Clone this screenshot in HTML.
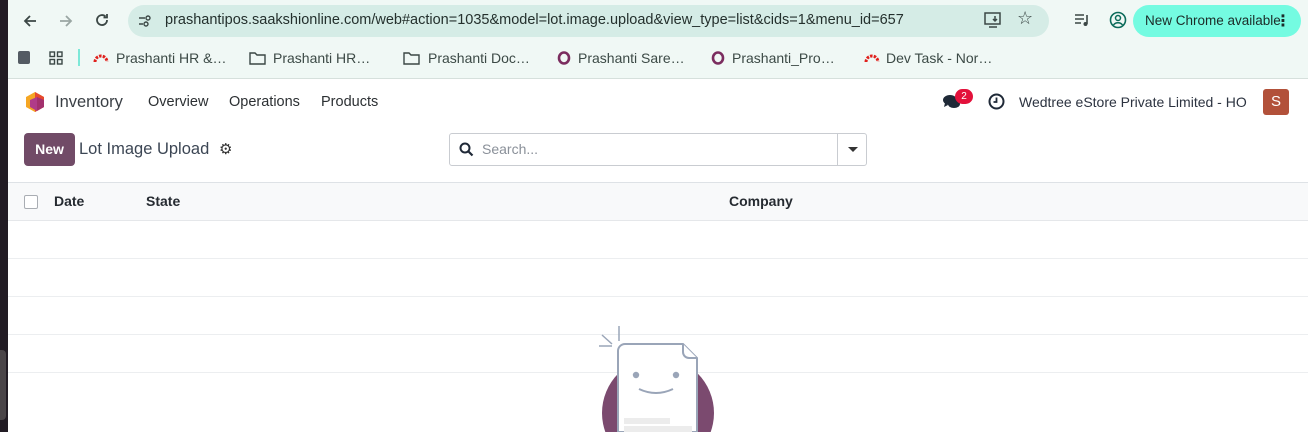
<!DOCTYPE html>
<html><head><meta charset="utf-8"><style>
*{box-sizing:border-box;margin:0;padding:0}
body{width:1308px;height:432px;overflow:hidden;font-family:"Liberation Sans","DejaVu Sans",sans-serif;background:#221c24;position:relative}
.win{position:absolute;left:8px;top:0;right:0;bottom:0;background:#fff;overflow:hidden}
.tb{position:absolute;left:0;top:0;right:0;height:79px;background:#f0f8f5;border-bottom:1px solid #d6e0dc}
.url{position:absolute;left:120px;top:5px;width:921px;height:32px;border-radius:16px;background:#d5ece6}
.t{position:absolute;white-space:nowrap}
.nc{position:absolute;left:1125px;top:5px;width:168px;height:32px;border-radius:16px;background:#74fbe1;font-size:13.5px;color:#1c2b28;padding:8px 12px}
.bm{font-size:14px;color:#3c4a46;top:50px}
.nav{font-size:14.5px;color:#2c3033;top:94px}
.hdr{position:absolute;left:0;right:0;top:182px;height:39px;background:#f8f9fa;border-top:1px solid #dee2e6;border-bottom:1px solid #e5e7ea}
.row{position:absolute;left:0;right:0;height:1px;background:#eceef0}
</style></head><body>
<div class="win">
<div class="tb">
 <svg style="position:absolute;left:14px;top:13px" width="16" height="16" viewBox="0 0 16 16"><path d="M14 8H3M8 3L3 8l5 5" stroke="#3b4745" stroke-width="1.8" fill="none"/></svg>
 <svg style="position:absolute;left:50px;top:13px" width="16" height="16" viewBox="0 0 16 16"><path d="M2 8h11M8 3l5 5-5 5" stroke="#9aa6a3" stroke-width="1.8" fill="none"/></svg>
 <svg style="position:absolute;left:86px;top:12px" width="16" height="16" viewBox="0 0 16 16"><path d="M13 8a5 5 0 1 1-1.5-3.5M13 2v3.5H9.5" stroke="#3b4745" stroke-width="1.8" fill="none"/></svg>
 <div class="url"></div>
 <svg style="position:absolute;left:129px;top:13px" width="16" height="16" viewBox="0 0 16 16"><path d="M2 5h6M2 11h4" stroke="#3b4745" stroke-width="1.6"/><circle cx="11" cy="5" r="2" stroke="#3b4745" fill="none" stroke-width="1.4"/><circle cx="9" cy="11" r="2" stroke="#3b4745" fill="none" stroke-width="1.4"/></svg>
 <div class="t" style="left:157px;top:12px;font-size:14.5px;color:#24302d">prashantipos.saakshionline.com/web#action=1035&amp;model=lot.image.upload&amp;view_type=list&amp;cids=1&amp;menu_id=657</div>
 <svg style="position:absolute;left:976px;top:12px" width="18" height="16" viewBox="0 0 18 16"><rect x="1" y="1" width="15" height="11" stroke="#3b4745" fill="none" stroke-width="1.5"/><path d="M5 15h8M11 4v5M9 7l2 2 2-2" stroke="#3b4745" stroke-width="1.5" fill="none"/></svg>
 <div class="t" style="left:1009px;top:8px;font-size:18px;color:#3b4745">☆</div>
 <svg style="position:absolute;left:1066px;top:13px" width="16" height="14" viewBox="0 0 16 14"><path d="M1 2h9M1 6h9M1 10h6" stroke="#3b4745" stroke-width="1.6"/><path d="M13 2v9" stroke="#3b4745" stroke-width="1.6"/><circle cx="11.5" cy="11" r="2" fill="#3b4745"/></svg>
 <svg style="position:absolute;left:1101px;top:11px" width="18" height="18" viewBox="0 0 18 18"><circle cx="9" cy="9" r="7.5" stroke="#0b6b5a" stroke-width="1.6" fill="none"/><circle cx="9" cy="7" r="2.5" stroke="#0b6b5a" stroke-width="1.5" fill="none"/><path d="M4.5 14c2-3 7-3 9 0" stroke="#0b6b5a" stroke-width="1.5" fill="none"/></svg>
 <div class="nc">New Chrome available<span style="position:absolute;right:10px;top:6px;font-weight:bold;font-size:16px">⋮</span></div>
 <div style="position:absolute;left:10px;top:51px;width:12px;height:13px;border-radius:2px;background:#545b63"></div>
 <svg style="position:absolute;left:41px;top:51px" width="14" height="14" viewBox="0 0 14 14"><g stroke="#3b4745" fill="none" stroke-width="1.4"><rect x="1" y="1" width="4.5" height="4.5"/><rect x="8.5" y="1" width="4.5" height="4.5"/><rect x="1" y="8.5" width="4.5" height="4.5"/><rect x="8.5" y="8.5" width="4.5" height="4.5"/></g></svg>
 <div style="position:absolute;left:70px;top:49px;width:2px;height:17px;background:#7de8d8"></div>
 <svg style="position:absolute;left:85px;top:51px" width="16" height="12" viewBox="0 0 16 12"><path d="M2 11A6 6 0 0 1 14 11" stroke="#e0201c" stroke-width="3" stroke-dasharray="2.5 1.2" fill="none"/></svg>
 <div class="t bm" style="left:108px">Prashanti HR &amp;…</div>
 <svg style="position:absolute;left:241px;top:51px" width="17" height="14" viewBox="0 0 17 14"><path d="M1 2h5l2 2h8v9H1z" stroke="#3b4745" stroke-width="1.4" fill="none"/></svg>
 <div class="t bm" style="left:265px">Prashanti HR…</div>
 <svg style="position:absolute;left:395px;top:51px" width="17" height="14" viewBox="0 0 17 14"><path d="M1 2h5l2 2h8v9H1z" stroke="#3b4745" stroke-width="1.4" fill="none"/></svg>
 <div class="t bm" style="left:420px">Prashanti Doc…</div>
 <svg style="position:absolute;left:549px;top:51px" width="14" height="14"><ellipse cx="7" cy="7" rx="5" ry="5.5" stroke="#7b2d5f" stroke-width="2.6" fill="none"/></svg>
 <div class="t bm" style="left:570px">Prashanti Sare…</div>
 <svg style="position:absolute;left:703px;top:51px" width="14" height="14"><ellipse cx="7" cy="7" rx="5" ry="5.5" stroke="#7b2d5f" stroke-width="2.6" fill="none"/></svg>
 <div class="t bm" style="left:724px">Prashanti_Pro…</div>
 <svg style="position:absolute;left:856px;top:51px" width="16" height="12" viewBox="0 0 16 12"><path d="M2 11A6 6 0 0 1 14 11" stroke="#e0201c" stroke-width="3" stroke-dasharray="2.5 1.2" fill="none"/></svg>
 <div class="t bm" style="left:878px">Dev Task - Nor…</div>
</div>
<svg style="position:absolute;left:16px;top:91px" width="22" height="22" viewBox="0 0 22 22"><path d="M11 1l9 5v10l-9 5-9-5V6z" fill="#f5a623"/><path d="M11 1l9 5v10l-9 5z" fill="#e6492e"/><path d="M13 6l7 3v7l-7 4z" fill="#a3306e"/><path d="M6 9l7-3v14l-7-4z" fill="#b03b89"/></svg>
<div class="t" style="left:47px;top:93px;font-size:16.5px;color:#3a3f45">Inventory</div>
<div class="t nav" style="left:140px">Overview</div>
<div class="t nav" style="left:221px">Operations</div>
<div class="t nav" style="left:313px">Products</div>
<svg style="position:absolute;left:934px;top:94px" width="20" height="16" viewBox="0 0 20 16"><ellipse cx="8" cy="6" rx="7" ry="5" fill="#1f2937"/><path d="M3 9l-1 4 4-2z" fill="#1f2937"/><ellipse cx="12" cy="10" rx="6" ry="4" fill="#1f2937"/></svg>
<div class="t" style="left:947px;top:89px;width:18px;height:15px;border-radius:8px;background:#e3113b;color:#fff;font-size:10px;text-align:center;line-height:15px">2</div>
<svg style="position:absolute;left:980px;top:93px" width="17" height="17" viewBox="0 0 17 17"><circle cx="8.5" cy="8.5" r="7" stroke="#1f2937" stroke-width="2" fill="none"/><path d="M8.5 4.5v4.5h-3" stroke="#1f2937" stroke-width="1.8" fill="none"/></svg>
<div class="t" style="left:1011px;top:94px;font-size:14px;color:#2c3340">Wedtree eStore Private Limited - HO</div>
<div class="t" style="left:1255px;top:89px;width:26px;height:26px;border-radius:3px;background:#b2513a;color:#fff;font-size:15px;text-align:center;line-height:26px">S</div>
<div class="t" style="left:16px;top:133px;width:51px;height:33px;border-radius:4px;background:#714b67;color:#fff;font-size:14px;font-weight:bold;text-align:center;line-height:32px">New</div>
<div class="t" style="left:71px;top:140px;font-size:16.5px;color:#3c4654">Lot Image Upload</div>
<div class="t" style="left:211px;top:140px;font-size:15px;color:#333">⚙</div>
<div style="position:absolute;left:441px;top:133px;width:418px;height:33px;border:1px solid #c9ccd1;border-radius:3px;background:#fff"></div>
<div style="position:absolute;left:829px;top:133px;width:1px;height:33px;background:#c9ccd1"></div>
<svg style="position:absolute;left:451px;top:142px" width="15" height="15" viewBox="0 0 15 15"><circle cx="6" cy="6" r="4.5" stroke="#1f2937" stroke-width="2" fill="none"/><path d="M9.5 9.5L13.5 13.5" stroke="#1f2937" stroke-width="2.2"/></svg>
<div class="t" style="left:474px;top:141px;font-size:14px;color:#8a9099">Search...</div>
<div class="t" style="left:840px;top:147px;width:0;height:0;border-left:5px solid transparent;border-right:5px solid transparent;border-top:5px solid #333"></div>
<div class="hdr"></div>
<div style="position:absolute;left:16px;top:195px;width:14px;height:14px;border:1px solid #a9adb3;border-radius:2px;background:#fff"></div>
<div class="t" style="left:46px;top:193px;font-size:14px;font-weight:bold;color:#262b31">Date</div>
<div class="t" style="left:138px;top:193px;font-size:14px;font-weight:bold;color:#262b31">State</div>
<div class="t" style="left:721px;top:193px;font-size:14px;font-weight:bold;color:#262b31">Company</div>
<div class="row" style="top:258px"></div>
<div class="row" style="top:296px"></div>
<div class="row" style="top:334px"></div>
<div class="row" style="top:372px"></div>
<svg style="position:absolute;left:590px;top:320px" width="130" height="112" viewBox="0 0 130 112">
<circle cx="60" cy="93" r="56" fill="#7b4a6f"/>
<path d="M14 24L4 15M21 21V6M14 26H1" stroke="#9aa5b8" stroke-width="1.5"/>
<path d="M27 24h58l14 14v74H20V31a7 7 0 0 1 7-7z" fill="#fff" stroke="#9aa5b8" stroke-width="2"/>
<path d="M85 24v8a6 6 0 0 0 6 6h8" fill="#fff" stroke="#9aa5b8" stroke-width="2"/>
<circle cx="38" cy="55" r="3.2" fill="#9aa5b8"/><circle cx="78" cy="55" r="3.2" fill="#9aa5b8"/>
<path d="M41 69q17 8 34 0" stroke="#9aa5b8" stroke-width="2" fill="none"/>
<rect x="26" y="98" width="46" height="6" fill="#ececec"/><rect x="26" y="106" width="68" height="6" fill="#ececec"/>
</svg>
</div>
<div style="position:absolute;left:0;top:350px;width:6px;height:70px;border-radius:0 4px 4px 0;background:#4a4548"></div>
</body></html>
